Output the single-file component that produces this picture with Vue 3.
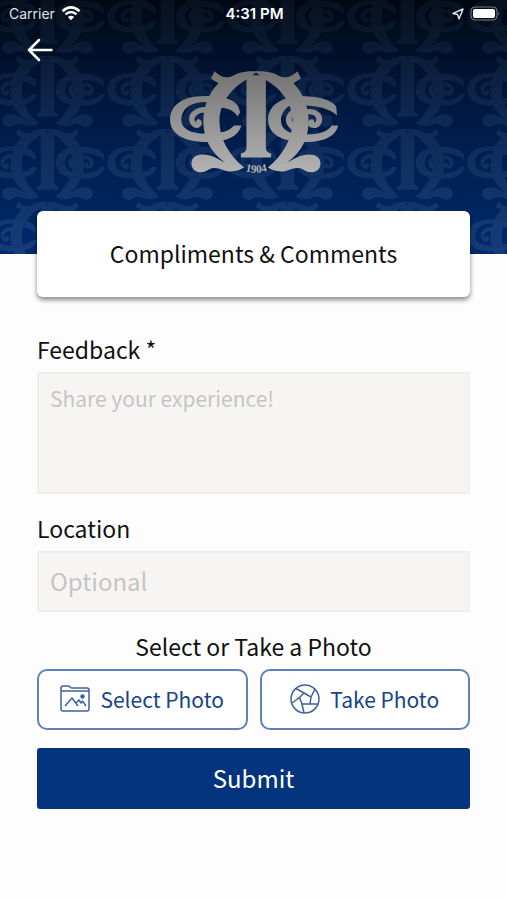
<template>
  <div class="page">
    <header class="header">
      <svg class="backdrop" aria-hidden="true">
        <defs>
          <symbol id="monogram" viewBox="20 24 520 316">
            <!-- stem -->
            <path d="M257 40H316V262Q317 275 332 278V290H240V278Q256 275 257 262Z" />
            <!-- left and right sides -->
            <path :d="side" />
            <path :d="side" transform="translate(572 0) scale(-1 1)" />
            <!-- left C -->
            <path
              d="M230 165C218 147 200 139 174 138L160 128C148 121 134 120 118 122C80 125 59 148 59 176C59 202 88 219 140 218C184 217 207 209 219 193H242C232 226 198 243 142 243C70 243 25 220 25 175C25 132 64 105 118 104C138 103 160 103 177 105C200 108 224 120 231 132L238 152Z"
            />
            <path
              d="M140 136C112 134 84 149 83 169C82 190 98 205 113 199C125 193 124 175 112 174C105 173 103 178 106 183C95 181 97 166 112 158C122 152 132 154 142 158Z"
            />
            <!-- right C -->
            <path
              d="M532 162C510 142 474 133 434 132L428 120C390 122 362 147 362 178C362 208 394 222 442 220C482 219 505 211 516 193H536C528 224 496 243 440 243C366 243 323 220 323 175C323 132 363 104 428 104C477 103 518 116 530 136Z"
            />
            <path
              d="M402 140C374 155 368 182 390 202C398 208 408 210 414 208V196C395 190 386 168 406 150Z"
            />
            <path
              d="M430 145C455 138 486 148 487 171C488 192 471 205 453 199C440 195 441 177 454 174C462 173 465 179 462 185C473 182 472 167 459 161C449 156 437 160 428 164Z"
            />
          </symbol>
          <pattern id="tiles" width="120" height="73" x="-14" y="-18" patternUnits="userSpaceOnUse">
            <use href="#monogram" x="0" y="0" width="120" height="73" />
          </pattern>
          <linearGradient id="silver" x1="0" y1="24" x2="0" y2="340" gradientUnits="userSpaceOnUse">
            <stop offset="0" stop-color="#727272" />
            <stop offset="1" stop-color="#b4b4b4" />
          </linearGradient>
        </defs>
        <rect width="100%" height="100%" fill="url(#tiles)" />
      </svg>

      <div class="status-bar">
        <div class="status-left">
          <span>Carrier</span>
          <svg class="wifi" viewBox="0 0 20 15" aria-hidden="true">
            <path d="M1.500 5.200Q10-2.400 18.500 5.200" />
            <path d="M4.500 8.400Q10 3.600 15.500 8.400" />
            <path class="solid" d="M6.900 11Q10 8.400 13.100 11L10 14.300Z" />
          </svg>
        </div>
        <span class="time">{{ time }}</span>
        <div class="status-right">
          <svg class="location" viewBox="0 0 12 12" aria-hidden="true">
            <path d="M11 1L7 11L5.600 6.400L1 5.400Z" />
          </svg>
          <svg class="battery" viewBox="0 0 30 15" aria-hidden="true">
            <rect class="shell" x="1" y="1" width="26" height="13" rx="4" />
            <rect class="level" x="3" y="3" width="22" height="9" rx="2" />
            <path class="tip" d="M28.500 5.500Q30 7.500 28.500 9.500Z" />
          </svg>
        </div>
      </div>

      <nav class="nav">
        <button type="button" class="back" aria-label="Back">
          <svg viewBox="0 0 26 24" aria-hidden="true">
            <path d="M24.500 12H2M12 2L2 12L12 22" />
          </svg>
        </button>
      </nav>

      <svg class="logo" viewBox="20 24 520 316" role="img" aria-label="Club crest">
        <use href="#monogram" x="20" y="24" width="520" height="316" />
        <path id="year-line" d="M242 328Q286 344 332 328" fill="none" />
        <text><textPath href="#year-line" startOffset="50%">1904</textPath></text>
      </svg>
    </header>

    <main class="content">
      <h1 class="title-card">Compliments &amp; Comments</h1>

      <form @submit.prevent>
        <div class="field">
          <label for="feedback">Feedback *</label>
          <textarea id="feedback" v-model="feedback" placeholder="Share your experience!"></textarea>
        </div>

        <div class="field">
          <label for="location">Location</label>
          <input id="location" v-model="location" type="text" placeholder="Optional" />
        </div>

        <p class="photo-title">Select or Take a Photo</p>
        <div class="photo-buttons">
          <button type="button" class="outline-btn">
            <svg viewBox="0 0 30 30" aria-hidden="true">
              <path d="M1 7V4Q1 2 3 2H8Q10 2 10.500 3.500Q11 4 12 4H27Q29 4 29 6V25Q29 27 27 27H3Q1 27 1 25V7H29" />
              <path d="M5 22L12 14L18 22M16 19L19 16L21 19L22.500 17L26 22" />
              <circle class="dot" cx="22.500" cy="12.500" r="1.500" />
            </svg>
            <span>Select Photo</span>
          </button>
          <button type="button" class="outline-btn">
            <svg viewBox="0 0 30 30" aria-hidden="true">
              <circle cx="15" cy="15" r="14" />
              <path d="M14 9L21 13L20 20H12L9.500 13.500Z" />
              <path d="M21 13L25 5M14 9L6 4.500M20 20H28M12 20L14 29M9.500 13.500L2 19" />
            </svg>
            <span>Take Photo</span>
          </button>
        </div>

        <button type="submit" class="submit-btn">Submit</button>
      </form>
    </main>
  </div>
</template>

<script setup>
import { ref } from 'vue'

const time = '4:31 PM'
const feedback = ref('')
const location = ref('')

// one half of the crest: horn, curved side and foot
const side =
  'M290 28C248 26 228 34 212 44C194 50 176 44 160 28L149 50L172 64C141 95 126 138 126 180C126 232 148 274 192 306C172 298 160 281 122 281C102 281 90 292 90 308C90 325 103 335 119 335C135 335 143 323 157 322C178 321 195 336 216 332C230 330 240 326 250 320C202 280 175 232 175 178C176 126 208 82 257 54Z'
</script>

<style>
body {
  margin: 0;
  background: #fdfdfd;
}
</style>

<style scoped>
.page {
  min-height: 100vh;
  background: #fdfdfd;
  color: #111;
  font-family: 'Noto Sans CJK SC', 'Noto Sans', sans-serif;
  font-size: 23px;
}

.page * {
  box-sizing: border-box;
}

.header {
  position: relative;
  display: flex;
  flex-direction: column;
  align-items: center;
  padding-bottom: 80px;
  background: linear-gradient(#000712, #001a44 45%, #002a6c);
}

.backdrop {
  position: absolute;
  inset: 0;
  width: 100%;
  height: 100%;
  fill: #7c98c0;
  opacity: 0.17;
  mask-image: linear-gradient(rgba(0, 0, 0, 0.4), #000);
}

.status-bar {
  position: relative;
  display: grid;
  grid-template-columns: 1fr auto 1fr;
  align-items: center;
  width: 100%;
  height: 27px;
  padding: 0 7px 0 9px;
  color: #fff;
  font-family: Inter, sans-serif;
  font-size: 14px;
}

.status-left,
.status-right {
  display: flex;
  align-items: center;
  gap: 6px;
  color: #dfe2e6;
}

.status-right {
  justify-content: flex-end;
}

.time {
  font-size: 15px;
  font-weight: 600;
}

.wifi {
  width: 20px;
  height: 15px;
  fill: none;
  stroke: #fff;
  stroke-width: 2.5;
}

.wifi .solid {
  fill: #fff;
  stroke: none;
}

.location {
  width: 12px;
  height: 12px;
  fill: none;
  stroke: #dfe2e6;
  stroke-width: 1.5;
  stroke-linejoin: round;
}

.battery {
  width: 30px;
  height: 15px;
}

.battery .shell {
  fill: none;
  stroke: #7c8087;
}

.battery .level {
  fill: #fff;
}

.battery .tip {
  fill: #7c8087;
}

.nav {
  position: relative;
  width: 100%;
  height: 43px;
  padding: 11px 27px;
}

.back {
  display: block;
  padding: 0;
  border: 0;
  background: none;
  cursor: pointer;
}

.back svg {
  display: block;
  width: 26px;
  height: 24px;
  fill: none;
  stroke: #fff;
  stroke-width: 2.5;
  stroke-linecap: round;
  stroke-linejoin: round;
}

.logo {
  position: relative;
  width: 174px;
  height: 104px;
  fill: url(#silver);
}

.logo text {
  font-family: 'Liberation Serif', serif;
  font-size: 34px;
  font-weight: bold;
  text-anchor: middle;
}

.content {
  position: relative;
  padding: 0 37px 40px;
}

.title-card {
  display: flex;
  align-items: center;
  justify-content: center;
  height: 86px;
  margin: -43px 0 36px;
  padding-bottom: 2px;
  border-radius: 6px;
  background: #fff;
  box-shadow: 0 3px 5px rgba(0, 0, 0, 0.45);
  font-size: 23px;
  font-weight: normal;
}

.field {
  margin-bottom: 18px;
}

label,
.photo-title {
  display: block;
  margin: 0 0 7px;
  line-height: 32px;
}

.photo-title {
  text-align: center;
}

textarea,
input {
  display: block;
  width: 100%;
  margin: 0;
  padding: 0 11px;
  border: 2px solid #efefee;
  border-radius: 0;
  outline: none;
  background: #f6f5f3;
  color: #111;
  font-family: inherit;
}

textarea {
  height: 122px;
  padding-top: 8px;
  font-size: 21px;
  line-height: 32px;
  resize: none;
}

input {
  height: 61px;
  padding-bottom: 2px;
  font-size: 24px;
}

textarea::placeholder,
input::placeholder {
  color: #c5c5c5;
  opacity: 1;
}

.photo-buttons {
  display: flex;
  gap: 12px;
  margin-bottom: 18px;
}

.outline-btn {
  display: flex;
  flex: 1;
  align-items: center;
  justify-content: center;
  gap: 10px;
  height: 61px;
  padding: 0 0 2px;
  border: 2px solid #5f82b4;
  border-radius: 10px;
  background: #fff;
  color: #174388;
  font-family: inherit;
  font-size: 21px;
  cursor: pointer;
}

.outline-btn svg {
  width: 30px;
  height: 30px;
  fill: none;
  stroke: #3d639e;
  stroke-width: 1.5;
  stroke-linejoin: round;
}

.outline-btn .dot {
  fill: #174388;
}

.submit-btn {
  display: block;
  width: 100%;
  height: 61px;
  padding: 0 0 2px;
  border: 0;
  border-radius: 3px;
  background: #05347e;
  color: #fff;
  font-family: inherit;
  font-size: 24px;
  cursor: pointer;
}
</style>
